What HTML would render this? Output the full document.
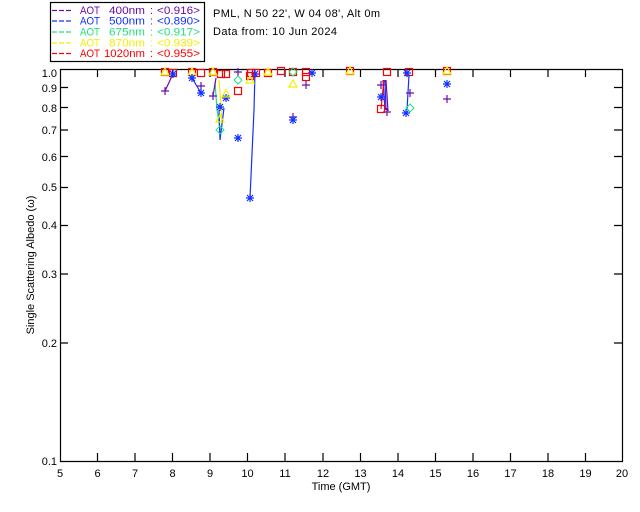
<!DOCTYPE html>
<html><head><meta charset="utf-8"><style>
html,body{margin:0;padding:0;background:#fff;}
svg{display:block;font-family:"Liberation Sans",sans-serif;}
</style></head><body>
<svg width="640" height="512" viewBox="0 0 640 512" xmlns="http://www.w3.org/2000/svg">
<defs>
<g id="plus"><path d="M-4 0H4M0 -4V4" stroke="#6a0dad" stroke-width="1.2" fill="none"/></g>
<g id="star"><path d="M-4 0H4M0 -4V4M-3 -3L3 3M-3 3L3 -3" stroke="#1030ff" stroke-width="1.2" fill="none"/></g>
<g id="sq"><rect x="-3.5" y="-3.5" width="7" height="7" stroke="#ff0000" stroke-width="1.2" fill="none"/></g>
<g id="dia"><path d="M0 -4L4 0L0 4L-4 0Z" stroke="#20e080" stroke-width="1" fill="none"/></g>
<g id="tri"><path d="M0 -4L4 3H-4Z" stroke="#f0f000" stroke-width="1.2" fill="none"/></g>
</defs>
<rect x="0" y="0" width="640" height="512" fill="#fff"/>
<rect x="50.5" y="2.5" width="154" height="59" fill="none" stroke="#000" stroke-width="1.2"/>
<g stroke-width="1.2">
<path d="M52 10.5H72" stroke="#6a0dad" stroke-dasharray="5 2"/>
<path d="M52 21H72" stroke="#1030ff" stroke-dasharray="5 2"/>
<path d="M52 32H72" stroke="#20e080" stroke-dasharray="5 2"/>
<path d="M52 43H72" stroke="#f0f000" stroke-dasharray="5 2"/>
<path d="M52 53.5H72" stroke="#ff0000" stroke-dasharray="5 2"/>
</g>
<g font-size="11">
<g fill="#6a0dad"><text x="80" y="14" textLength="20" lengthAdjust="spacingAndGlyphs">AOT</text><text x="109" y="14" textLength="36" lengthAdjust="spacingAndGlyphs">400nm</text><text x="150" y="14">:</text><text x="157" y="14" textLength="43" lengthAdjust="spacingAndGlyphs">&lt;0.916&gt;</text></g>
<g fill="#1030ff"><text x="80" y="24.5" textLength="20" lengthAdjust="spacingAndGlyphs">AOT</text><text x="109" y="24.5" textLength="36" lengthAdjust="spacingAndGlyphs">500nm</text><text x="150" y="24.5">:</text><text x="157" y="24.5" textLength="43" lengthAdjust="spacingAndGlyphs">&lt;0.890&gt;</text></g>
<g fill="#20e080"><text x="80" y="35.5" textLength="20" lengthAdjust="spacingAndGlyphs">AOT</text><text x="109" y="35.5" textLength="36" lengthAdjust="spacingAndGlyphs">675nm</text><text x="150" y="35.5">:</text><text x="157" y="35.5" textLength="43" lengthAdjust="spacingAndGlyphs">&lt;0.917&gt;</text></g>
<g fill="#f0f000"><text x="80" y="46.5" textLength="20" lengthAdjust="spacingAndGlyphs">AOT</text><text x="109" y="46.5" textLength="36" lengthAdjust="spacingAndGlyphs">870nm</text><text x="150" y="46.5">:</text><text x="157" y="46.5" textLength="43" lengthAdjust="spacingAndGlyphs">&lt;0.939&gt;</text></g>
<g fill="#ff0000"><text x="80" y="57" textLength="20" lengthAdjust="spacingAndGlyphs">AOT</text><text x="104" y="57" textLength="41" lengthAdjust="spacingAndGlyphs">1020nm</text><text x="150" y="57">:</text><text x="157" y="57" textLength="43" lengthAdjust="spacingAndGlyphs">&lt;0.955&gt;</text></g>
<text x="213" y="17" fill="#000" textLength="167" lengthAdjust="spacing">PML, N 50 22', W 04 08', Alt 0m</text>
<text x="213" y="35" fill="#000" textLength="124" lengthAdjust="spacing">Data from: 10 Jun 2024</text>
</g>
<g stroke="#000" stroke-width="1.2" fill="none">
<path d="M60.5 69.5H622.5V461.5H60.5Z"/>
<path d="M97.5 461V453M135 461V453M172.5 461V453M210 461V453M247.5 461V453M285 461V453M323 461V453M360.5 461V453M398 461V453M435.5 461V453M473 461V453M510.5 461V453M548 461V453M585.5 461V453"/>
<path d="M97.5 69V77M135 69V77M172.5 69V77M210 69V77M247.5 69V77M285 69V77M323 69V77M360.5 69V77M398 69V77M435.5 69V77M473 69V77M510.5 69V77M548 69V77M585.5 69V77"/>
<path d="M60 87.5H68M60 107.5H68M60 130H68M60 156.5H68M60 187.5H68M60 225.5H68M60 274H68M60 343H68"/>
<path d="M622 87.5H614M622 107.5H614M622 130H614M622 156.5H614M622 187.5H614M622 225.5H614M622 274H614M622 343H614"/>
</g>
<g font-size="11" fill="#000" text-anchor="end">
<text x="57" y="77">1.0</text><text x="57" y="92">0.9</text><text x="57" y="112">0.8</text>
<text x="57" y="134">0.7</text><text x="57" y="161">0.6</text><text x="57" y="191">0.5</text>
<text x="57" y="229">0.4</text><text x="57" y="278">0.3</text><text x="57" y="347">0.2</text>
<text x="57" y="465">0.1</text>
</g>
<g font-size="11" fill="#000" text-anchor="middle">
<text x="60" y="477">5</text><text x="97.5" y="477">6</text><text x="135" y="477">7</text>
<text x="172.5" y="477">8</text><text x="210" y="477">9</text><text x="247.5" y="477">10</text>
<text x="285" y="477">11</text><text x="323" y="477">12</text><text x="360.5" y="477">13</text>
<text x="398" y="477">14</text><text x="435.5" y="477">15</text><text x="473" y="477">16</text>
<text x="510.5" y="477">17</text><text x="548" y="477">18</text><text x="585.5" y="477">19</text>
<text x="622" y="477">20</text>
<text x="341" y="490">Time (GMT)</text>
</g>
<text transform="translate(34,265) rotate(-90)" font-size="11" text-anchor="middle" fill="#000">Single Scattering Albedo (ω)</text>
<g fill="none" stroke-width="1.2">
<path d="M220 130L217 110L215 82" stroke="#20e080"/>
<path d="M222 125L221 105L219 80" stroke="#f0f000"/>
<path d="M201 93L192 78M219 110L220 140L224 108M250 198L254 110L255 72M386 110L385 80M407 110L409 75" stroke="#1030ff"/>
<path d="M165 91L172 76M213 96L216 78M385 110L383 80M388 111L386 80" stroke="#6a0dad"/>
<path d="M381 109L384 80" stroke="#ff0000"/>
</g>
<g>
<use href="#sq" x="165" y="72"/><use href="#sq" x="173" y="73"/><use href="#sq" x="192" y="72"/><use href="#sq" x="201" y="73"/>
<use href="#sq" x="213" y="72"/><use href="#sq" x="221" y="74"/><use href="#sq" x="226" y="74"/>
<use href="#sq" x="251" y="73"/><use href="#sq" x="256" y="73"/><use href="#sq" x="268" y="73"/><use href="#sq" x="281" y="71"/>
<use href="#sq" x="293" y="72"/><use href="#sq" x="306" y="72"/><use href="#sq" x="350" y="71"/><use href="#sq" x="387" y="72"/>
<use href="#sq" x="409" y="72"/><use href="#sq" x="447" y="71"/>
<use href="#tri" x="165" y="72"/><use href="#tri" x="192" y="72"/><use href="#tri" x="213" y="72"/><use href="#tri" x="268" y="72"/><use href="#tri" x="350" y="71"/><use href="#tri" x="447" y="71"/>
<use href="#dia" x="293" y="72"/><use href="#star" x="173" y="74"/><use href="#star" x="255" y="74"/><use href="#star" x="312" y="73"/><use href="#star" x="407" y="73"/>
</g>
<g>
<use href="#plus" x="165" y="91"/><use href="#plus" x="201" y="86"/><use href="#plus" x="213" y="96"/><use href="#plus" x="238" y="72"/>
<use href="#plus" x="306" y="85"/><use href="#plus" x="293" y="117"/><use href="#plus" x="381" y="85"/><use href="#plus" x="387" y="112"/>
<use href="#plus" x="410" y="93"/><use href="#plus" x="447" y="99"/>
<use href="#star" x="192" y="78"/><use href="#star" x="201" y="93"/><use href="#star" x="226" y="98"/><use href="#star" x="220" y="107"/>
<use href="#star" x="238" y="138"/><use href="#star" x="250" y="198"/><use href="#star" x="293" y="120"/><use href="#star" x="381" y="97"/>
<use href="#star" x="406" y="113"/><use href="#star" x="447" y="84"/>
<use href="#sq" x="238" y="91"/><use href="#sq" x="250" y="76"/><use href="#sq" x="306" y="77"/><use href="#sq" x="381" y="109"/>
<use href="#dia" x="220" y="130"/><use href="#dia" x="238" y="80"/><use href="#dia" x="410" y="108"/>
<use href="#tri" x="226" y="94"/><use href="#tri" x="220" y="119"/><use href="#tri" x="250" y="80"/><use href="#tri" x="293" y="84"/>
</g>
</svg>
</body></html>
